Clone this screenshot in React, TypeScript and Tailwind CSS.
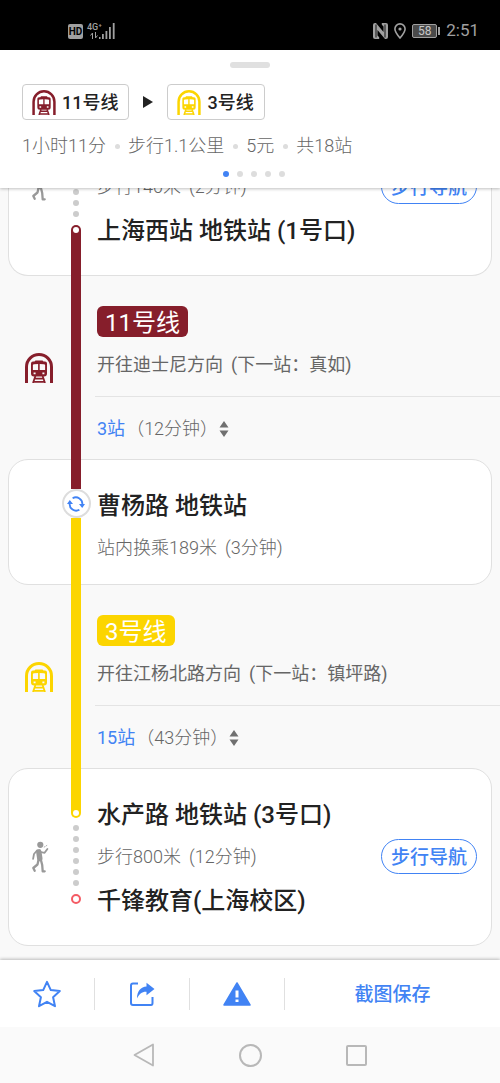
import type { ReactNode } from "react";

const LINE_11 = "#861e2b";
const LINE_3 = "#fcd500";

function TrainIcon({ color, className }: { color: string; className: string }) {
  return (
    <svg viewBox="0 0 28 30" className={className} fill="none" aria-hidden="true">
      <path d="M1.5 30V14a12.5 12.5 0 0 1 25 0v16" stroke={color} strokeWidth="3" />
      <path
        fill={color}
        fillRule="evenodd"
        d="M9.5 8.6 10.5 7.4h7l1 1.2h1.5q2 0 2 2v10q0 3-3 3h-10q-3 0-3-3v-10q0-2 2-2ZM7.9 12v5h5.2v-6q-5.2 0-5.2 1Zm6.8-1v6h5.4v-5q0-1-5.4-1ZM8.6 19.4v1.8h2v-1.8Zm8.8 0v1.8h2v-1.8Z"
      />
      <path d="M10.4 23 8 30M17.6 23 20 30M9.6 25.6h8.8M8.6 28.8h10.8" stroke={color} strokeWidth="1.8" />
    </svg>
  );
}

function WalkIcon() {
  return (
    <svg
      viewBox="0 0 18 32"
      className="h-8 w-[18px]"
      fill="none"
      stroke="#999"
      strokeLinecap="round"
      strokeLinejoin="round"
      aria-hidden="true"
    >
      <circle cx="9.3" cy="3.8" r="3.1" fill="#999" stroke="none" />
      <path d="M7.8 10.8 8.8 17.5" strokeWidth="5.4" />
      <path d="M6 9.5 3 13l-.9 4.8M10 11.2l3.600.6 2.800-3.900" strokeWidth="1.800" />
      <path d="M7.600 18.500 6.500 23.500 2.300 27l1.400 2.800M9.800 18.500l1.400 5.500.5 6.300h2" strokeWidth="2.300" />
      <path d="m13.200 6 .8-.3M15.200 4.800l.6-.3" strokeWidth=".8" />
    </svg>
  );
}

function TransferIcon() {
  return (
    <svg viewBox="0 0 18 18" className="size-[18px]" fill="none" aria-hidden="true">
      <path
        d="M5.600 3.200A6.500 6.500 0 0 1 15.300 9.600M12.400 14.800A6.500 6.500 0 0 1 2.700 8.400"
        stroke="#4183f4"
        strokeWidth="1.800"
      />
      <path d="M12 9h6l-2.800 4ZM0 9h6L2.800 5Z" fill="#4183f4" />
    </svg>
  );
}

function SortIcon() {
  return (
    <svg viewBox="0 0 10 16" className="h-4 w-[10px]" fill="#707070" aria-hidden="true">
      <path d="M5 0 9.500 6.500h-9ZM5 16l4.500-6.500h-9Z" />
    </svg>
  );
}

function StatusBar() {
  return (
    <div className="flex h-[50px] items-center justify-between bg-black pt-3 pr-[21px] pl-[68px] text-[#a0a0a0]">
      <div className="flex items-center gap-1">
        <span className="flex h-[15px] w-[15px] items-center justify-center rounded-xs bg-[#a0a0a0] text-[10px] font-bold text-black">
          HD
        </span>
        <div className="flex items-end">
          <div className="flex w-3 flex-col items-start">
            <span className="text-[9px] leading-[9px] font-medium">4G⁺</span>
            <svg viewBox="0 0 8 7" className="ml-[3px] h-[7px] w-2" fill="none" stroke="#a0a0a0" aria-hidden="true">
              <path d="M2.500 7V1L.5 3.500M5.500 0v6l2-2.500" />
            </svg>
          </div>
          <svg viewBox="0 0 16 16" className="h-4 w-4" fill="#a0a0a0" aria-hidden="true">
            <path d="M0 14h1.500v2H0ZM3 11h1.800v5H3ZM6.500 8h1.800v8H6.500ZM10 4h1.800v12H10ZM13.800 0h1.800v16h-1.800Z" />
          </svg>
        </div>
      </div>
      <div className="flex items-center gap-[6px]">
        <svg viewBox="0 0 15 16" className="h-4 w-[15px]" fill="#a0a0a0" aria-hidden="true">
          <path d="M0 2q0-2 2-2h1l7.500 9V3.500L8.800 1.800V0H13q2 0 2 2v12q0 2-2 2h-1L4.500 7v5.500l1.700 1.700V16H2q-2 0-2-2Z" />
          <path d="M3 1.500v13M12 1.500v13" stroke="#000" strokeWidth=".9" />
        </svg>
        <svg viewBox="0 0 12 16" className="h-4 w-3" fill="none" stroke="#a0a0a0" aria-hidden="true">
          <path d="M6 15C3 11.500.9 8.800.9 6a5.100 5.100 0 0 1 10.200 0C11.100 8.800 9 11.500 6 15Z" strokeWidth="1.600" />
          <circle cx="6" cy="6" r="1.600" fill="#a0a0a0" stroke="none" />
        </svg>
        <div className="flex items-center gap-px">
          <span className="flex h-[14px] w-[25px] items-center justify-center rounded-xs border border-[#a0a0a0] bg-[#4a4a4a] text-xs text-[#c8c8c8]">
            58
          </span>
          <span className="h-2 w-[2px] bg-[#a0a0a0]" />
        </div>
        <time className="text-[17px]">2:51</time>
      </div>
    </div>
  );
}

function LineChip({ color, name }: { color: string; name: string }) {
  return (
    <span className="flex h-9 items-center gap-[6px] rounded-sm border border-[#ccc] pr-[10px] pl-[9px] text-lg font-medium text-[#222]">
      <TrainIcon color={color} className="h-[25px] w-6" />
      <span className="pt-[2px]">{name}</span>
    </span>
  );
}

function RouteSummary() {
  const facts = ["1小时11分", "步行1.1公里", "5元", "共18站"];
  return (
    <header className="relative z-10 flex h-[138px] flex-col bg-white shadow-[0_1px_3px_rgba(0,0,0,0.25)]">
      <span className="mt-3 h-[6px] w-10 self-center rounded-full bg-[#e0e0e0]" />
      <div className="mt-4 flex items-center gap-[13px] px-[22px]">
        <LineChip color={LINE_11} name="11号线" />
        <svg viewBox="0 0 12 12" className="size-3" fill="#222" aria-hidden="true">
          <path d="M1 0v12l10-6Z" />
        </svg>
        <LineChip color={LINE_3} name="3号线" />
      </div>
      <ul className="mt-3 flex items-center px-[22px] text-lg font-light text-[#666]">
        {facts.map((fact, i) => (
          <li key={fact} className="flex items-center">
            {i > 0 && <span className="mr-2 ml-[9px] size-[5px] rounded-full bg-[#ddd]" />}
            {fact}
          </li>
        ))}
      </ul>
      <div className="mt-[11px] flex justify-center gap-2 pl-2">
        {[0, 1, 2, 3, 4].map((page) => (
          <span key={page} className={`size-[6px] rounded-full ${page === 0 ? "bg-[#4183f4]" : "bg-[#ddd]"}`} />
        ))}
      </div>
    </header>
  );
}

function StationName({ children }: { children: ReactNode }) {
  return <h2 className="flex h-[43px] items-center pt-[2px] text-2xl font-medium text-[#222]">{children}</h2>;
}

function WalkText({ distance, time }: { distance: string; time: string }) {
  return (
    <p className="flex gap-2 pt-px text-lg font-light text-[#666]">
      <span>{distance}</span>
      <span>({time})</span>
    </p>
  );
}

function WalkRow({ distance, time }: { distance: string; time: string }) {
  return (
    <div className="flex h-[43px] items-center justify-between pr-[14px]">
      <WalkText distance={distance} time={time} />
      <button
        type="button"
        className="h-[35px] rounded-full border border-[#4183f4] px-[9px] pt-[3px] text-[19px] font-medium text-[#4183f4]"
      >
        步行导航
      </button>
    </div>
  );
}

function WalkDots({ count }: { count: number }) {
  return (
    <div className="flex flex-col items-center gap-[5px]">
      {Array.from({ length: count }, (_, i) => (
        <span key={i} className="size-[6px] rounded-full bg-[#ccc]" />
      ))}
    </div>
  );
}

type RideProps = {
  color: string;
  line: string;
  direction: string;
  next: string;
  stops: string;
  duration: string;
};

function Ride({ color, line, direction, next, stops, duration }: RideProps) {
  return (
    <section className="flex h-[183px]">
      <div className="flex w-[71px] items-center justify-center pl-[6px]">
        <TrainIcon color={color} className="h-[30px] w-7" />
      </div>
      <div className="w-[10px]" style={{ backgroundColor: color }} />
      <div className="flex-1 pl-4">
        <div className="flex pt-[30px]">
          <span
            className="flex h-[31px] items-center rounded-md px-2 pt-[3px] text-2xl text-white"
            style={{ backgroundColor: color }}
          >
            {line}
          </span>
        </div>
        <p className="-ml-[2px] flex h-[60px] items-center gap-2 border-b border-[#e4e4e4] pb-[3px] pl-[2px] text-lg text-[#666]">
          <span>开往{direction}方向</span>
          <span>(下一站：{next})</span>
        </p>
        <button type="button" className="flex h-[62px] items-center gap-px pt-px text-lg font-light text-[#666]">
          <span className="font-normal text-[#4183f4]">{stops}</span>
          <span>（{duration}）</span>
          <SortIcon />
        </button>
      </div>
    </section>
  );
}

function Toolbar() {
  return (
    <footer className="relative z-10 bg-white shadow-[0_-1px_3px_rgba(0,0,0,0.25)]">
      <div className="flex h-[67px] items-center">
        <button type="button" aria-label="收藏" className="flex h-8 w-[19%] items-center justify-center border-r border-[#e0e0e0]">
          <svg viewBox="0 0 28 28" className="size-7" fill="none" stroke="#4183f4" strokeWidth="2" strokeLinejoin="round">
            <path d="m14 1.800 3.800 8.300 9 1-6.700 6.100 1.900 9-8-4.400-8 4.400 1.900-9-6.700-6.100 9-1Z" />
          </svg>
        </button>
        <button type="button" aria-label="分享" className="flex h-8 w-[19%] items-center justify-center border-r border-[#e0e0e0]">
          <svg viewBox="0 0 26 26" className="size-[26px]" fill="none">
            <path d="M9 2.500H4Q2 2.500 2 4.500V22q0 2 2 2h18q1.500 0 1.500-2v-6" stroke="#4183f4" strokeWidth="2" />
            <path d="M8 17.500C8 10 12 5.800 17.500 5.500V1.800L25.500 8l-8 6.200v-3.500C13 10.500 10 13 8 17.500Z" fill="#4183f4" />
          </svg>
        </button>
        <button type="button" aria-label="报错" className="flex h-8 w-[19%] items-center justify-center border-r border-[#e0e0e0]">
          <svg viewBox="0 0 28 24" className="h-6 w-7">
            <path d="M14 1 27 23H1Z" fill="#4183f4" stroke="#4183f4" strokeWidth="1.500" strokeLinejoin="round" />
            <path d="M14 8.500v7M14 17.500v2.500" stroke="#fff" strokeWidth="3" />
          </svg>
        </button>
        <button type="button" className="flex-1 pt-[3px] text-[19px] font-medium text-[#4183f4]">
          截图保存
        </button>
      </div>
      <nav className="flex h-14 items-center justify-center gap-[84px] bg-[#fafafa]">
        <button type="button" aria-label="返回">
          <svg viewBox="0 0 22 24" className="h-6 w-[22px]" fill="none" stroke="#b8b8b8" strokeWidth="1.800" strokeLinejoin="round">
            <path d="M20 1.500v21L1.500 12Z" />
          </svg>
        </button>
        <button type="button" aria-label="主页" className="size-[23px] rounded-full border-2 border-[#b8b8b8]" />
        <button type="button" aria-label="最近任务" className="size-[21px] rounded-xs border-2 border-[#b8b8b8]" />
      </nav>
    </footer>
  );
}

export default function App() {
  return (
    <div className="flex min-h-screen flex-col overflow-hidden bg-[#f9f9f9] font-['Roboto','Noto_Sans_CJK_SC',sans-serif]">
      <StatusBar />
      <RouteSummary />

      <main className="-mt-[23px] flex-1 pb-[14px]">
        <section className="mx-2 flex rounded-b-[20px] border border-t-0 border-[#e0e0e0] bg-white">
          <div className="flex w-[62px] justify-center pt-1">
            <WalkIcon />
          </div>
          <div className="-mb-px flex w-[10px] flex-col pt-[13px]">
            <WalkDots count={4} />
            <div className="mt-[8px] flex flex-1 justify-center rounded-t-full bg-[#861e2b] pt-[2px]">
              <span className="size-[6px] rounded-full bg-white" />
            </div>
          </div>
          <div className="flex-1 pb-6 pl-4">
            <WalkRow distance="步行140米" time="2分钟" />
            <StationName>上海西站 地铁站 (1号口)</StationName>
          </div>
        </section>

        <Ride color={LINE_11} line="11号线" direction="迪士尼" next="真如" stops="3站" duration="12分钟" />

        <section className="mx-2 flex rounded-[20px] border border-[#e0e0e0] bg-white">
          <div className="w-[62px]" />
          <div className="-my-px flex w-[10px] flex-col items-center">
            <div className="h-[30px] w-full bg-[#861e2b]" />
            <span className="flex size-[29px] shrink-0 items-center justify-center rounded-full border-2 border-[#ddd] bg-white">
              <TransferIcon />
            </span>
            <div className="w-full flex-1 bg-[#fcd500]" />
          </div>
          <div className="flex-1 pt-[23px] pb-[15px] pl-4">
            <StationName>曹杨路 地铁站</StationName>
            <div className="flex h-[43px] items-center">
              <WalkText distance="站内换乘189米" time="3分钟" />
            </div>
          </div>
        </section>

        <Ride color={LINE_3} line="3号线" direction="江杨北路" next="镇坪路" stops="15站" duration="43分钟" />

        <section className="mx-2 flex rounded-[20px] border border-[#e0e0e0] bg-white">
          <div className="flex w-[62px] items-center justify-center">
            <WalkIcon />
          </div>
          <div className="-mt-px flex w-[10px] flex-col">
            <div className="flex h-[50px] items-end justify-center rounded-b-full bg-[#fcd500] pb-[2px]">
              <span className="size-[6px] rounded-full bg-white" />
            </div>
            <div className="pt-[7px] pb-2">
              <WalkDots count={6} />
            </div>
            <span className="size-[10px] rounded-full border-2 border-[#f45b64] bg-white" />
          </div>
          <div className="flex-1 pt-[23px] pb-6 pl-4">
            <StationName>水产路 地铁站 (3号口)</StationName>
            <WalkRow distance="步行800米" time="12分钟" />
            <StationName>千锋教育(上海校区)</StationName>
          </div>
        </section>
      </main>

      <Toolbar />
    </div>
  );
}
